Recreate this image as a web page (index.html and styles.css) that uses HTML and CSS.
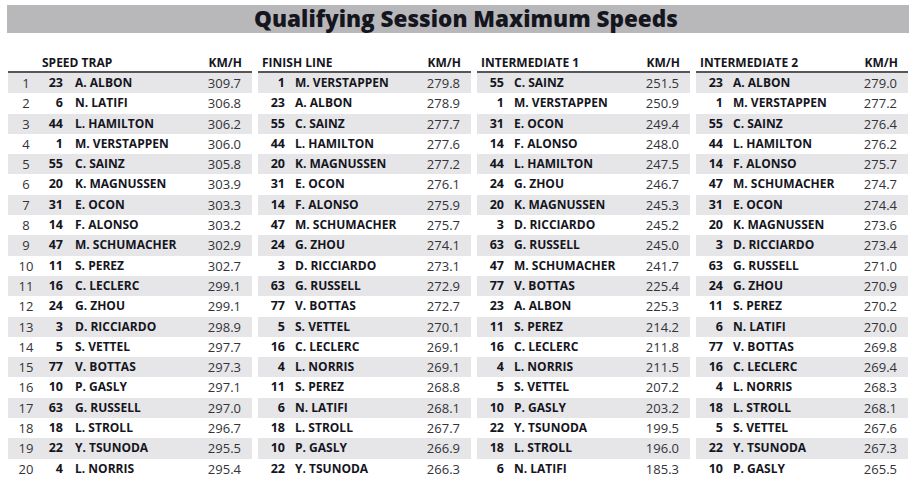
FILE: index.html
```html
<!DOCTYPE html>
<html>
<head>
<meta charset="utf-8">
<link rel="stylesheet" href="styles.css">
</head>
<body>
<div class="page">
  <div class="band"><h1 class="title">Qualifying Session Maximum Speeds</h1></div>
  <div class="tables">
    <div class="trap first">
      <div class="head"><span class="hpos"></span><span class="hname">SPEED TRAP</span><span class="hspd">KM/H</span></div>
      <div class="row"><span class="pos">1</span><span class="num">23</span><span class="name">A. ALBON</span><span class="spd">309.7</span></div>
      <div class="row"><span class="pos">2</span><span class="num">6</span><span class="name">N. LATIFI</span><span class="spd">306.8</span></div>
      <div class="row"><span class="pos">3</span><span class="num">44</span><span class="name">L. HAMILTON</span><span class="spd">306.2</span></div>
      <div class="row"><span class="pos">4</span><span class="num">1</span><span class="name">M. VERSTAPPEN</span><span class="spd">306.0</span></div>
      <div class="row"><span class="pos">5</span><span class="num">55</span><span class="name">C. SAINZ</span><span class="spd">305.8</span></div>
      <div class="row"><span class="pos">6</span><span class="num">20</span><span class="name">K. MAGNUSSEN</span><span class="spd">303.9</span></div>
      <div class="row"><span class="pos">7</span><span class="num">31</span><span class="name">E. OCON</span><span class="spd">303.3</span></div>
      <div class="row"><span class="pos">8</span><span class="num">14</span><span class="name">F. ALONSO</span><span class="spd">303.2</span></div>
      <div class="row"><span class="pos">9</span><span class="num">47</span><span class="name">M. SCHUMACHER</span><span class="spd">302.9</span></div>
      <div class="row"><span class="pos">10</span><span class="num">11</span><span class="name">S. PEREZ</span><span class="spd">302.7</span></div>
      <div class="row"><span class="pos">11</span><span class="num">16</span><span class="name">C. LECLERC</span><span class="spd">299.1</span></div>
      <div class="row"><span class="pos">12</span><span class="num">24</span><span class="name">G. ZHOU</span><span class="spd">299.1</span></div>
      <div class="row"><span class="pos">13</span><span class="num">3</span><span class="name">D. RICCIARDO</span><span class="spd">298.9</span></div>
      <div class="row"><span class="pos">14</span><span class="num">5</span><span class="name">S. VETTEL</span><span class="spd">297.7</span></div>
      <div class="row"><span class="pos">15</span><span class="num">77</span><span class="name">V. BOTTAS</span><span class="spd">297.3</span></div>
      <div class="row"><span class="pos">16</span><span class="num">10</span><span class="name">P. GASLY</span><span class="spd">297.1</span></div>
      <div class="row"><span class="pos">17</span><span class="num">63</span><span class="name">G. RUSSELL</span><span class="spd">297.0</span></div>
      <div class="row"><span class="pos">18</span><span class="num">18</span><span class="name">L. STROLL</span><span class="spd">296.7</span></div>
      <div class="row"><span class="pos">19</span><span class="num">22</span><span class="name">Y. TSUNODA</span><span class="spd">295.5</span></div>
      <div class="row"><span class="pos">20</span><span class="num">4</span><span class="name">L. NORRIS</span><span class="spd">295.4</span></div>
    </div>
    <div class="trap">
      <div class="head"><span class="hname">FINISH LINE</span><span class="hspd">KM/H</span></div>
      <div class="row"><span class="num">1</span><span class="name">M. VERSTAPPEN</span><span class="spd">279.8</span></div>
      <div class="row"><span class="num">23</span><span class="name">A. ALBON</span><span class="spd">278.9</span></div>
      <div class="row"><span class="num">55</span><span class="name">C. SAINZ</span><span class="spd">277.7</span></div>
      <div class="row"><span class="num">44</span><span class="name">L. HAMILTON</span><span class="spd">277.6</span></div>
      <div class="row"><span class="num">20</span><span class="name">K. MAGNUSSEN</span><span class="spd">277.2</span></div>
      <div class="row"><span class="num">31</span><span class="name">E. OCON</span><span class="spd">276.1</span></div>
      <div class="row"><span class="num">14</span><span class="name">F. ALONSO</span><span class="spd">275.9</span></div>
      <div class="row"><span class="num">47</span><span class="name">M. SCHUMACHER</span><span class="spd">275.7</span></div>
      <div class="row"><span class="num">24</span><span class="name">G. ZHOU</span><span class="spd">274.1</span></div>
      <div class="row"><span class="num">3</span><span class="name">D. RICCIARDO</span><span class="spd">273.1</span></div>
      <div class="row"><span class="num">63</span><span class="name">G. RUSSELL</span><span class="spd">272.9</span></div>
      <div class="row"><span class="num">77</span><span class="name">V. BOTTAS</span><span class="spd">272.7</span></div>
      <div class="row"><span class="num">5</span><span class="name">S. VETTEL</span><span class="spd">270.1</span></div>
      <div class="row"><span class="num">16</span><span class="name">C. LECLERC</span><span class="spd">269.1</span></div>
      <div class="row"><span class="num">4</span><span class="name">L. NORRIS</span><span class="spd">269.1</span></div>
      <div class="row"><span class="num">11</span><span class="name">S. PEREZ</span><span class="spd">268.8</span></div>
      <div class="row"><span class="num">6</span><span class="name">N. LATIFI</span><span class="spd">268.1</span></div>
      <div class="row"><span class="num">18</span><span class="name">L. STROLL</span><span class="spd">267.7</span></div>
      <div class="row"><span class="num">10</span><span class="name">P. GASLY</span><span class="spd">266.9</span></div>
      <div class="row"><span class="num">22</span><span class="name">Y. TSUNODA</span><span class="spd">266.3</span></div>
    </div>
    <div class="trap">
      <div class="head"><span class="hname">INTERMEDIATE 1</span><span class="hspd">KM/H</span></div>
      <div class="row"><span class="num">55</span><span class="name">C. SAINZ</span><span class="spd">251.5</span></div>
      <div class="row"><span class="num">1</span><span class="name">M. VERSTAPPEN</span><span class="spd">250.9</span></div>
      <div class="row"><span class="num">31</span><span class="name">E. OCON</span><span class="spd">249.4</span></div>
      <div class="row"><span class="num">14</span><span class="name">F. ALONSO</span><span class="spd">248.0</span></div>
      <div class="row"><span class="num">44</span><span class="name">L. HAMILTON</span><span class="spd">247.5</span></div>
      <div class="row"><span class="num">24</span><span class="name">G. ZHOU</span><span class="spd">246.7</span></div>
      <div class="row"><span class="num">20</span><span class="name">K. MAGNUSSEN</span><span class="spd">245.3</span></div>
      <div class="row"><span class="num">3</span><span class="name">D. RICCIARDO</span><span class="spd">245.2</span></div>
      <div class="row"><span class="num">63</span><span class="name">G. RUSSELL</span><span class="spd">245.0</span></div>
      <div class="row"><span class="num">47</span><span class="name">M. SCHUMACHER</span><span class="spd">241.7</span></div>
      <div class="row"><span class="num">77</span><span class="name">V. BOTTAS</span><span class="spd">225.4</span></div>
      <div class="row"><span class="num">23</span><span class="name">A. ALBON</span><span class="spd">225.3</span></div>
      <div class="row"><span class="num">11</span><span class="name">S. PEREZ</span><span class="spd">214.2</span></div>
      <div class="row"><span class="num">16</span><span class="name">C. LECLERC</span><span class="spd">211.8</span></div>
      <div class="row"><span class="num">4</span><span class="name">L. NORRIS</span><span class="spd">211.5</span></div>
      <div class="row"><span class="num">5</span><span class="name">S. VETTEL</span><span class="spd">207.2</span></div>
      <div class="row"><span class="num">10</span><span class="name">P. GASLY</span><span class="spd">203.2</span></div>
      <div class="row"><span class="num">22</span><span class="name">Y. TSUNODA</span><span class="spd">199.5</span></div>
      <div class="row"><span class="num">18</span><span class="name">L. STROLL</span><span class="spd">196.0</span></div>
      <div class="row"><span class="num">6</span><span class="name">N. LATIFI</span><span class="spd">185.3</span></div>
    </div>
    <div class="trap last">
      <div class="head"><span class="hname">INTERMEDIATE 2</span><span class="hspd">KM/H</span></div>
      <div class="row"><span class="num">23</span><span class="name">A. ALBON</span><span class="spd">279.0</span></div>
      <div class="row"><span class="num">1</span><span class="name">M. VERSTAPPEN</span><span class="spd">277.2</span></div>
      <div class="row"><span class="num">55</span><span class="name">C. SAINZ</span><span class="spd">276.4</span></div>
      <div class="row"><span class="num">44</span><span class="name">L. HAMILTON</span><span class="spd">276.2</span></div>
      <div class="row"><span class="num">14</span><span class="name">F. ALONSO</span><span class="spd">275.7</span></div>
      <div class="row"><span class="num">47</span><span class="name">M. SCHUMACHER</span><span class="spd">274.7</span></div>
      <div class="row"><span class="num">31</span><span class="name">E. OCON</span><span class="spd">274.4</span></div>
      <div class="row"><span class="num">20</span><span class="name">K. MAGNUSSEN</span><span class="spd">273.6</span></div>
      <div class="row"><span class="num">3</span><span class="name">D. RICCIARDO</span><span class="spd">273.4</span></div>
      <div class="row"><span class="num">63</span><span class="name">G. RUSSELL</span><span class="spd">271.0</span></div>
      <div class="row"><span class="num">24</span><span class="name">G. ZHOU</span><span class="spd">270.9</span></div>
      <div class="row"><span class="num">11</span><span class="name">S. PEREZ</span><span class="spd">270.2</span></div>
      <div class="row"><span class="num">6</span><span class="name">N. LATIFI</span><span class="spd">270.0</span></div>
      <div class="row"><span class="num">77</span><span class="name">V. BOTTAS</span><span class="spd">269.8</span></div>
      <div class="row"><span class="num">16</span><span class="name">C. LECLERC</span><span class="spd">269.4</span></div>
      <div class="row"><span class="num">4</span><span class="name">L. NORRIS</span><span class="spd">268.3</span></div>
      <div class="row"><span class="num">18</span><span class="name">L. STROLL</span><span class="spd">268.1</span></div>
      <div class="row"><span class="num">5</span><span class="name">S. VETTEL</span><span class="spd">267.6</span></div>
      <div class="row"><span class="num">22</span><span class="name">Y. TSUNODA</span><span class="spd">267.3</span></div>
      <div class="row"><span class="num">10</span><span class="name">P. GASLY</span><span class="spd">265.5</span></div>
    </div>
  </div>
</div>
</body>
</html>
```
FILE: styles.css
```css
html, body {
  margin: 0;
  padding: 0;
  background: #ffffff;
}
body {
  font-family: "Open Sans", "Liberation Sans", sans-serif;
  color: #1e1e24;
}
.page {
  padding: 5px 0 0 7px;
  width: 902px;
}
.band {
  height: 28px;
  background: #b8b8bb;
  display: flex;
  align-items: center;
  justify-content: center;
  padding-left: 16px;
  box-sizing: border-box;
}
.title {
  margin: 0;
  font-size: 22.5px;
  font-weight: 800;
  line-height: 28px;
  color: #15151e;
  letter-spacing: 0;
}
.tables {
  display: flex;
  gap: 6px;
  padding-left: 1px;
}
.trap {
  width: 213px;
  display: flex;
  flex-direction: column;
}
.trap.first {
  width: 244px;
}
.trap.last {
  width: 212px;
}
.head {
  display: flex;
  align-items: flex-end;
  padding: 0 10px 0 4px;
  border-bottom: 2px solid #56565a;
  box-sizing: border-box;
  height: 40px;
  font-size: 12px;
  font-weight: 700;
  line-height: 16px;
  color: #15151e;
}
.first .head {
  padding-left: 34px;
}
.hname {
  flex: 1;
}
.hspd {
  text-align: right;
}
.row {
  height: 20.3px;
  display: flex;
  align-items: center;
  font-size: 12px;
  line-height: 20.3px;
}
.row:nth-child(even) {
  background: #e6e6e8;
}
.pos {
  width: 36px;
  text-align: center;
  font-size: 13px;
  font-weight: 400;
  color: #333338;
}
.num {
  width: 27px;
  text-align: right;
  font-weight: 700;
  font-size: 12.5px;
  color: #15151e;
}
.first .num {
  width: 19px;
}
.name {
  flex: 1;
  padding-left: 10px;
  font-weight: 700;
  font-size: 12px;
  color: #15151e;
}
.first .name {
  padding-left: 12px;
}
.spd {
  padding-right: 11px;
  text-align: right;
  font-size: 13px;
  font-weight: 400;
  color: #333338;
}
```
